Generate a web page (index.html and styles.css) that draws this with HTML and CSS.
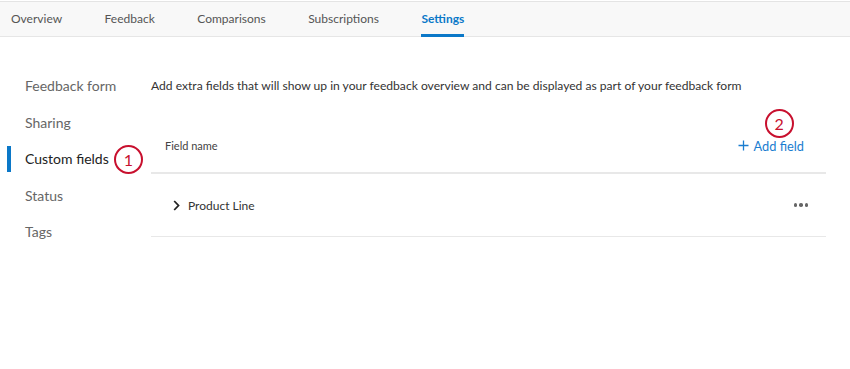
FILE: index.html
```html
<!DOCTYPE html>
<html lang="en">
<head>
  <meta charset="UTF-8" />
  <title>Settings</title>
  <link rel="stylesheet" href="styles.css">
</head>
<body>

  <div class="tabs">
    <div class="tab">Overview</div>
    <div class="tab">Feedback</div>
    <div class="tab">Comparisons</div>
    <div class="tab">Subscriptions</div>
    <div class="tab active">Settings</div>
  </div>

  <div class="page">
    <div class="side-nav">
      <div class="nav-item">Feedback form</div>
      <div class="nav-item">Sharing</div>
      <div class="nav-item active">Custom fields <span class="callout callout-1">1</span></div>
      <div class="nav-item">Status</div>
      <div class="nav-item">Tags</div>
    </div>

    <div class="content">
      <p class="intro">Add extra fields that will show up in your feedback overview and can be displayed as part of your feedback form</p>

      <div class="table-head">
        <span class="col-name">Field name</span>
        <span class="add-field">
          <span class="callout callout-2">2</span>
          <svg width="11" height="11" viewBox="0 0 11 11"><path d="M5.5 0.5v10M0.5 5.5h10" stroke="#1a7dd0" stroke-width="1.3" fill="none"/></svg>
          Add field
        </span>
      </div>

      <div class="field-row">
        <span class="field-name">
          <svg width="7" height="11" viewBox="0 0 7 11"><path d="M1.2 1l4.3 4.5-4.3 4.5" stroke="#222" stroke-width="1.8" fill="none"/></svg>
          Product Line
        </span>
        <span class="more"><i></i><i></i><i></i></span>
      </div>
    </div>
  </div>

</body>
</html>
```

FILE: styles.css
```css
* {
  box-sizing: border-box;
  margin: 0;
  padding: 0;
}

body {
  font-family: 'Lato', 'Open Sans', sans-serif;
  background: #fff;
  color: #333;
  padding-top: 1px;
}

.tabs {
  display: flex;
  height: 36px;
  background-color: #f8f8f8;
  border-top: 1px solid #e4e4e4;
  border-bottom: 1px solid #e6e6e6;
  padding-left: 11px;
  gap: 42.5px;
}

.tab {
  font-size: 12px;
  color: #555;
  line-height: 34px;
  height: 35px;
  border-bottom: 3px solid transparent;
}

.tab.active {
  color: #0b78c8;
  font-weight: bold;
  border-bottom-color: #0b78c8;
}

.page {
  display: flex;
}

.side-nav {
  width: 151px;
  flex-shrink: 0;
  padding-top: 31px;
}

.nav-item {
  position: relative;
  height: 36.5px;
  line-height: 36.5px;
  padding-left: 25px;
  font-size: 14px;
  color: #666;
}

.nav-item.active {
  color: #222;
}

.nav-item.active::before {
  content: "";
  position: absolute;
  left: 7px;
  top: 5px;
  width: 4px;
  height: 26px;
  background-color: #0b78c8;
}

.callout {
  position: absolute;
  width: 29px;
  height: 29px;
  border: 2px solid #c8102e;
  border-radius: 50%;
  background: #fff;
  color: #c8102e;
  font-size: 16px;
  line-height: 25px;
  text-align: center;
}

.callout-1 {
  left: 114px;
  top: 4px;
}

.callout-2 {
  left: 27px;
  top: -29px;
}

.content {
  width: 675px;
  padding-top: 31px;
}

.intro {
  font-size: 12.1px;
  line-height: 36px;
  color: #333;
}

.table-head {
  display: flex;
  justify-content: space-between;
  align-items: center;
  height: 70px;
  padding: 15px 22px 0 14px;
  border-bottom: 2px solid #e8e8e8;
}

.col-name {
  font-size: 11px;
  color: #444;
}

.add-field {
  position: relative;
  display: flex;
  align-items: center;
  gap: 5px;
  font-size: 12.8px;
  color: #1a7dd0;
}

.field-row {
  display: flex;
  justify-content: space-between;
  align-items: center;
  height: 63px;
  padding: 0 18px 0 22px;
  border-bottom: 1px solid #e8e8e8;
}

.field-name {
  display: flex;
  align-items: center;
  gap: 8px;
  font-size: 12px;
  color: #333;
}

.more {
  display: flex;
  gap: 2px;
}

.more i {
  width: 3.5px;
  height: 3.5px;
  border-radius: 50%;
  background-color: #666;
}
```
